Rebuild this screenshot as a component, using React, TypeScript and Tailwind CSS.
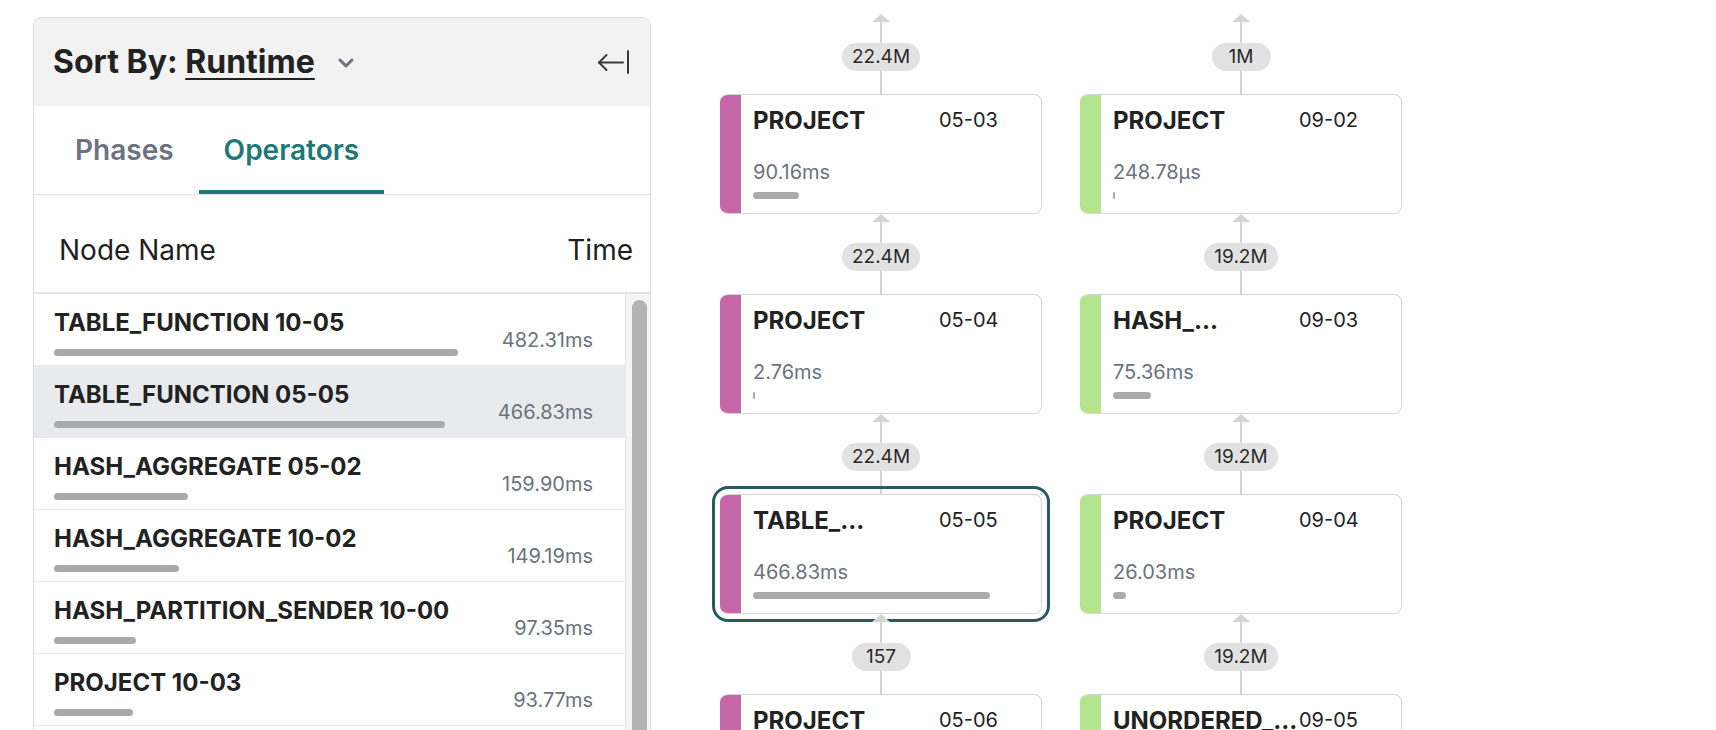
import { Fragment } from "react";
import { ChevronDown } from "lucide-react";

type Row = { name: string; ms: number; time: string };

const rows: Row[] = [
  { name: "TABLE_FUNCTION 10-05", ms: 482.31, time: "482.31ms" },
  { name: "TABLE_FUNCTION 05-05", ms: 466.83, time: "466.83ms" },
  { name: "HASH_AGGREGATE 05-02", ms: 159.9, time: "159.90ms" },
  { name: "HASH_AGGREGATE 10-02", ms: 149.19, time: "149.19ms" },
  { name: "HASH_PARTITION_SENDER 10-00", ms: 97.35, time: "97.35ms" },
  { name: "PROJECT 10-03", ms: 93.77, time: "93.77ms" },
];

type GraphNode = {
  name: string;
  id: string;
  time: string;
  ms: number;
  edge: string;
  selected?: boolean;
};

const leftNodes: GraphNode[] = [
  { name: "PROJECT", id: "05-03", time: "90.16ms", ms: 90.16, edge: "22.4M" },
  { name: "PROJECT", id: "05-04", time: "2.76ms", ms: 2.76, edge: "22.4M" },
  { name: "TABLE_...", id: "05-05", time: "466.83ms", ms: 466.83, edge: "22.4M", selected: true },
  { name: "PROJECT", id: "05-06", time: "1.12ms", ms: 1.12, edge: "157" },
];

const rightNodes: GraphNode[] = [
  { name: "PROJECT", id: "09-02", time: "248.78µs", ms: 0.25, edge: "1M" },
  { name: "HASH_...", id: "09-03", time: "75.36ms", ms: 75.36, edge: "19.2M" },
  { name: "PROJECT", id: "09-04", time: "26.03ms", ms: 26.03, edge: "19.2M" },
  { name: "UNORDERED_...", id: "09-05", time: "1.02ms", ms: 1.02, edge: "19.2M" },
];

function CollapseIcon() {
  return (
    <svg width="33" height="24" viewBox="0 0 33 24" fill="none" stroke="#3a3a3a" strokeWidth="2" strokeLinecap="round" strokeLinejoin="round">
      <path d="M2 12.5 H26" />
      <path d="M9.5 5 L2 12.5 L9.5 20" />
      <path d="M31 1 V23" />
    </svg>
  );
}

function Edge({ label }: { label: string }) {
  return (
    <div className="flex h-[80px] flex-col items-center">
      <svg width="18" height="8" viewBox="0 0 18 8">
        <path d="M9 0 L18 8 L0 8 Z" fill="#d4d4d4" />
      </svg>
      <div className="h-[21px] w-[2px] bg-[#d4d4d4]" />
      <div className="h-[28px] min-w-[59px] rounded-full bg-[#e2e2e2] px-[10px] text-center text-[19px] leading-[28px] text-[#2a2a2a]">
        {label}
      </div>
      <div className="w-[2px] flex-1 bg-[#d4d4d4]" />
    </div>
  );
}

function Card({ node, stripe }: { node: GraphNode; stripe: string }) {
  return (
    <div
      className={
        "flex h-[120px] w-[322px] shrink-0 overflow-hidden rounded-[8px] border border-l-0 border-[#d6d6d6] bg-white" +
        (node.selected ? " outline-[3px] outline-offset-[5px] outline-[#275a5e] outline-solid" : "")
      }
    >
      <div className={"w-[21px] shrink-0 " + stripe} />
      <div className="flex flex-1 flex-col pl-[12px] pt-[11px]">
        <div className="flex items-start">
          <div className="w-[186px] truncate text-[24px] font-bold leading-[29px] text-[#222]">{node.name}</div>
          <div className="text-[20px] leading-[29px] text-[#222]">{node.id}</div>
        </div>
        <div className="mt-[25px] text-[20px] leading-[24px] text-[#6b7280]">{node.time}</div>
        <div className="mt-[8px] h-[7px] rounded-full bg-[#aaaaaa]" style={{ width: Math.max(2, node.ms * 0.508) }} />
      </div>
    </div>
  );
}

function Column({ nodes, stripe }: { nodes: GraphNode[]; stripe: string }) {
  return (
    <div className="flex w-[322px] flex-col items-center">
      {nodes.map((n) => (
        <Fragment key={n.id}>
          <Edge label={n.edge} />
          <Card node={n} stripe={stripe} />
        </Fragment>
      ))}
    </div>
  );
}

export default function App() {
  return (
    <div className="flex h-[730px] w-[1716px] items-start overflow-hidden bg-white font-['Inter','Noto_Sans',sans-serif] text-[#222]">
      {/* side panel */}
      <div className="ml-[33px] mt-[17px] flex h-[740px] w-[618px] shrink-0 flex-col overflow-hidden rounded-t-[8px] border border-[#dcdcdc]">
        <div className="flex h-[88px] shrink-0 items-center justify-between bg-[#f2f2f2] pl-[19px] pr-[20px]">
          <div className="flex items-center">
            <span className="text-[32px] font-bold text-[#222]">
              Sort By: <span className="underline decoration-2 underline-offset-[5px]">Runtime</span>
            </span>
            <ChevronDown className="ml-[19px] mt-[2px] text-[#6b7280]" size={24} strokeWidth={3} />
          </div>
          <CollapseIcon />
        </div>

        <div className="flex h-[89px] shrink-0 border-b border-[#e0e0e0] px-[16px]">
          <div className="flex items-center px-[25px] text-[28px] font-semibold text-[#6b7280]">Phases</div>
          <div className="flex items-center border-b-4 border-[#1d7876] px-[25px] pt-[4px] text-[28px] font-semibold text-[#1d7876]">
            Operators
          </div>
        </div>

        <div className="flex h-[99px] shrink-0 items-center justify-between border-b-2 border-[#e4e4e4] pl-[25px] pr-[17px] pt-[12px] text-[28px] text-[#1f1f1f]">
          <span>Node Name</span>
          <span>Time</span>
        </div>

        <div className="flex flex-1">
          <div className="flex flex-1 flex-col">
            {rows.map((r, i) => (
              <div
                key={r.name}
                className={
                  "flex h-[72px] shrink-0 justify-between border-b border-[#e8e8e8] pl-[20px] pr-[32px]" +
                  (i === 1 ? " bg-[#e9eaed]" : "")
                }
              >
                <div className="flex flex-col pt-[14px]">
                  <div className="text-[24px] font-bold leading-[29px] text-[#222]">{r.name}</div>
                  <div className="mt-[12px] h-[7px] rounded-full bg-[#aaaaaa]" style={{ width: r.ms * 0.838 }} />
                </div>
                <div className="pt-[34px] text-[20px] leading-[24px] text-[#6b7280]">{r.time}</div>
              </div>
            ))}
          </div>
          <div className="w-[25px] shrink-0 border-l border-[#e6e6e6] bg-[#f5f5f5] pl-[6px] pt-[6px]">
            <div className="h-[600px] w-[15px] rounded-full bg-[#b3b3b3]" />
          </div>
        </div>
      </div>

      {/* operator graph */}
      <div className="ml-[69px] mt-[14px] flex gap-[38px]">
        <Column nodes={leftNodes} stripe="bg-[#c466a8]" />
        <Column nodes={rightNodes} stripe="bg-[#b4e48e]" />
      </div>
    </div>
  );
}
